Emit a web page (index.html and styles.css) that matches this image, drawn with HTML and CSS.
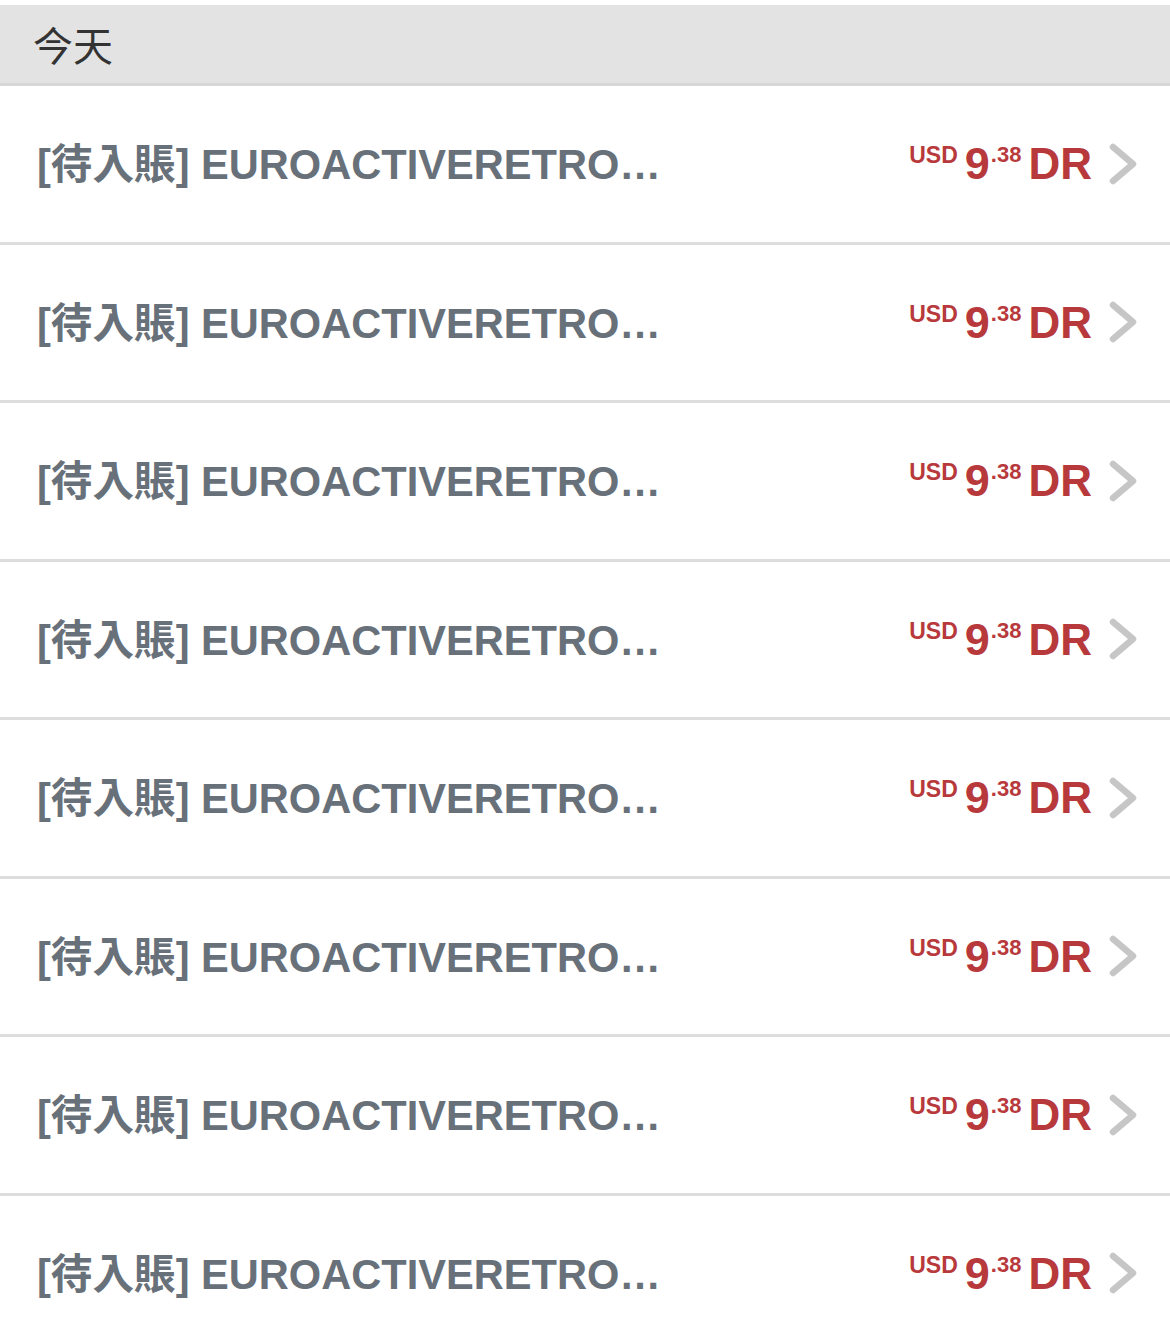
FILE: index.html
```html
<!DOCTYPE html>
<html lang="zh-Hant">
<head>
<meta charset="utf-8">
<title>今天</title>
<link rel="stylesheet" href="styles.css">
</head>
<body>
<div class="page">
  <div class="section-header">今天</div>
  <ul class="list">
    <li class="row"><span class="title">[待入賬] EUROACTIVERETRO…</span><span class="amount"><span class="cur">USD</span><span class="int">9</span><span class="dec">.38</span><span class="dr">DR</span></span><svg class="chev" width="30" height="42" viewBox="0 0 30 42"><polyline points="5,4 25,21 5,38" /></svg></li>
    <li class="row"><span class="title">[待入賬] EUROACTIVERETRO…</span><span class="amount"><span class="cur">USD</span><span class="int">9</span><span class="dec">.38</span><span class="dr">DR</span></span><svg class="chev" width="30" height="42" viewBox="0 0 30 42"><polyline points="5,4 25,21 5,38" /></svg></li>
    <li class="row"><span class="title">[待入賬] EUROACTIVERETRO…</span><span class="amount"><span class="cur">USD</span><span class="int">9</span><span class="dec">.38</span><span class="dr">DR</span></span><svg class="chev" width="30" height="42" viewBox="0 0 30 42"><polyline points="5,4 25,21 5,38" /></svg></li>
    <li class="row"><span class="title">[待入賬] EUROACTIVERETRO…</span><span class="amount"><span class="cur">USD</span><span class="int">9</span><span class="dec">.38</span><span class="dr">DR</span></span><svg class="chev" width="30" height="42" viewBox="0 0 30 42"><polyline points="5,4 25,21 5,38" /></svg></li>
    <li class="row"><span class="title">[待入賬] EUROACTIVERETRO…</span><span class="amount"><span class="cur">USD</span><span class="int">9</span><span class="dec">.38</span><span class="dr">DR</span></span><svg class="chev" width="30" height="42" viewBox="0 0 30 42"><polyline points="5,4 25,21 5,38" /></svg></li>
    <li class="row"><span class="title">[待入賬] EUROACTIVERETRO…</span><span class="amount"><span class="cur">USD</span><span class="int">9</span><span class="dec">.38</span><span class="dr">DR</span></span><svg class="chev" width="30" height="42" viewBox="0 0 30 42"><polyline points="5,4 25,21 5,38" /></svg></li>
    <li class="row"><span class="title">[待入賬] EUROACTIVERETRO…</span><span class="amount"><span class="cur">USD</span><span class="int">9</span><span class="dec">.38</span><span class="dr">DR</span></span><svg class="chev" width="30" height="42" viewBox="0 0 30 42"><polyline points="5,4 25,21 5,38" /></svg></li>
    <li class="row"><span class="title">[待入賬] EUROACTIVERETRO…</span><span class="amount"><span class="cur">USD</span><span class="int">9</span><span class="dec">.38</span><span class="dr">DR</span></span><svg class="chev" width="30" height="42" viewBox="0 0 30 42"><polyline points="5,4 25,21 5,38" /></svg></li>
  </ul>
</div>
</body>
</html>
```
FILE: styles.css
```css
html, body {
  margin: 0;
  padding: 0;
  background: #ffffff;
}

.page {
  padding-top: 5px;
  font-family: "Liberation Sans", "Noto Sans CJK TC", sans-serif;
}

.section-header {
  box-sizing: border-box;
  height: 81px;
  display: flex;
  align-items: center;
  padding-left: 33px;
  background: #e3e3e3;
  border-bottom: 3px solid #d7d7d7;
  font-family: "Noto Sans CJK TC", "Noto Sans CJK SC", sans-serif;
  font-size: 40px;
  color: #333333;
  line-height: 1;
}

.list {
  list-style: none;
  margin: 0;
  padding: 0;
}

.row {
  height: 158.5px;
  box-sizing: border-box;
  border-bottom: 3px solid #dddddd;
  display: flex;
  align-items: center;
  padding: 0 32px 0 37px;
}

.title {
  flex: 1;
  font-family: "Liberation Sans", "Noto Sans CJK TC", sans-serif;
  font-weight: bold;
  font-size: 41.6px;
  color: #68717a;
  white-space: nowrap;
  line-height: 1;
  margin-top: 3px;
}

.amount {
  display: flex;
  align-items: flex-start;
  color: #b8393b;
  font-weight: bold;
  line-height: 1;
}

.cur {
  font-size: 23px;
  margin-top: 3px;
  margin-right: 7px;
}

.int {
  font-size: 45px;
  margin-top: 0;
}

.dec {
  font-size: 22px;
  margin-top: 3px;
  margin-left: 1px;
  margin-right: 7px;
}

.dr {
  font-size: 44px;
  margin-top: 1px;
}

.chev {
  margin-left: 16px;
  fill: none;
  stroke: #c6c6c6;
  stroke-width: 6.5;
  stroke-linecap: round;
  stroke-linejoin: round;
}
```
